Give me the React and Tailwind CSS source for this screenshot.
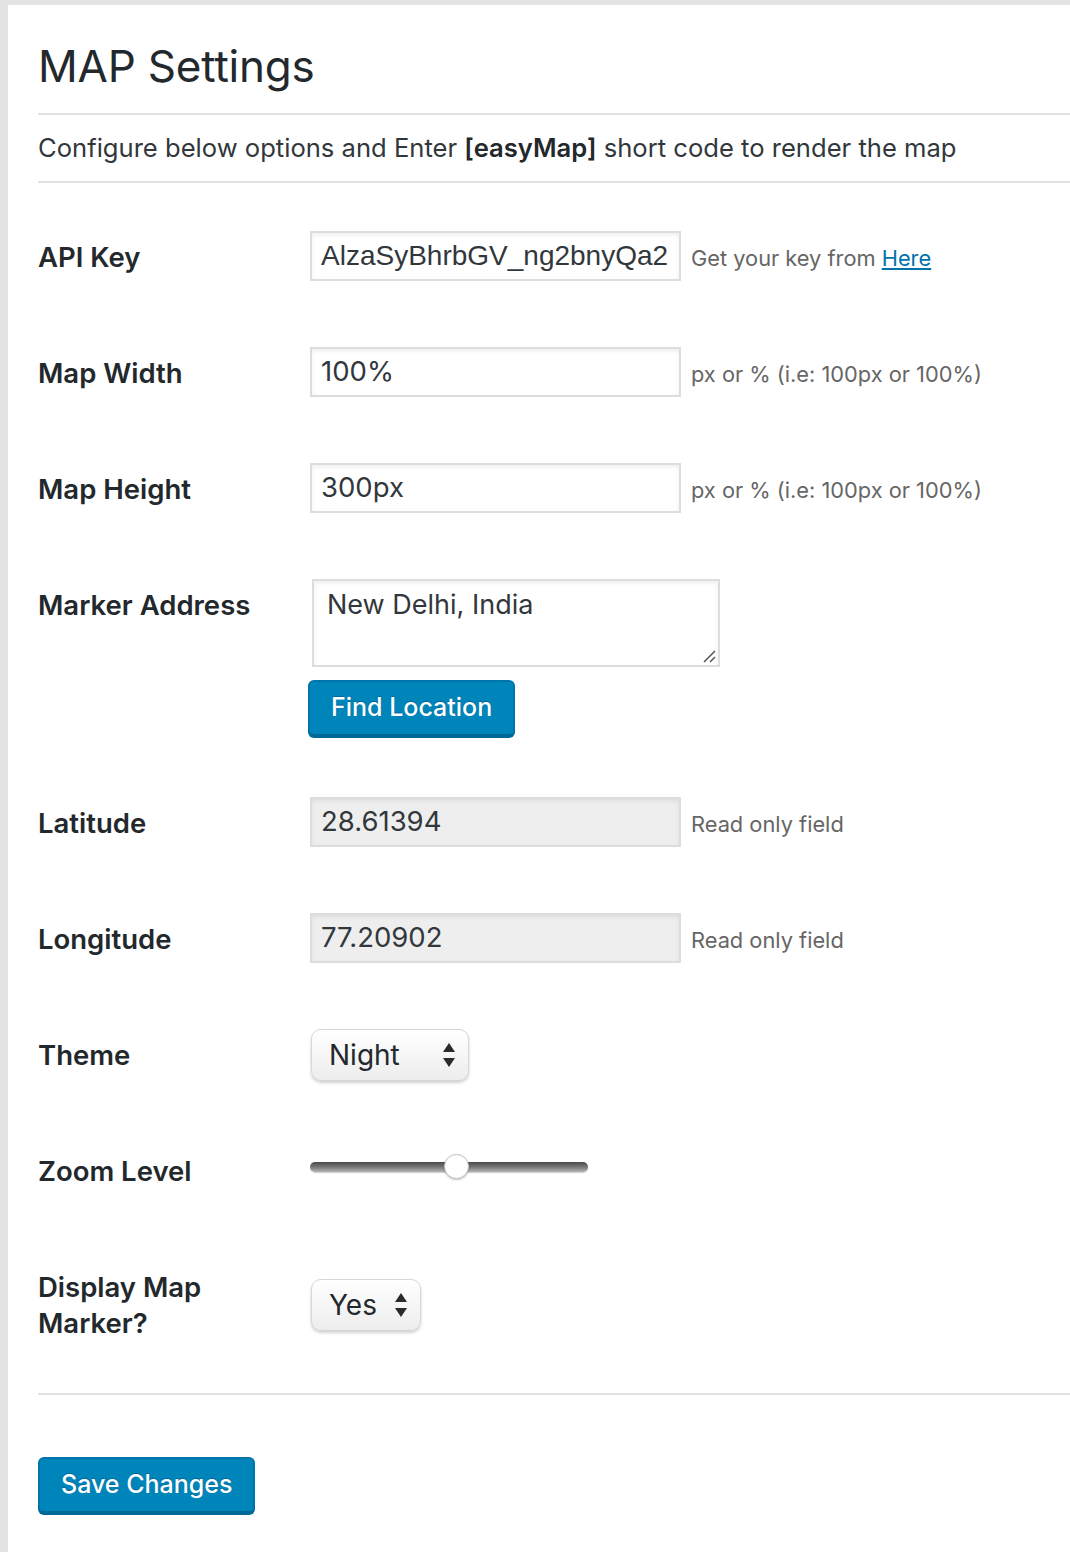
import React from "react";

const font = { fontFamily: "Inter, 'Noto Sans', sans-serif" };

function Arrows() {
  return (
    <svg width="14" height="26" viewBox="0 0 14 26" className="shrink-0">
      <path d="M7 1 L13 10 L1 10 Z" fill="#2b2b2b" />
      <path d="M7 25 L13 16 L1 16 Z" fill="#2b2b2b" />
    </svg>
  );
}

function Label({ children }) {
  return (
    <div className="w-[272px] shrink-0 pt-[8px] text-[27.5px] leading-[36px] font-semibold text-[#23282d]">
      {children}
    </div>
  );
}

function TextInput({ value, readOnly, arial }) {
  return (
    <div
      className={`w-[371px] h-[50px] border-2 border-[#dddddd] shadow-[inset_0_2px_4px_rgba(0,0,0,0.07)] flex items-center px-[9px] text-[#32373c] overflow-hidden whitespace-nowrap ${
        readOnly ? "bg-[#eeeeee]" : "bg-white"
      } ${arial ? "text-[28px] font-['Liberation_Sans',Arial,sans-serif]" : "text-[27.5px]"}`}
    >
      {value}
    </div>
  );
}

function Help({ children }) {
  return <span className="ml-[10px] pt-[4px] text-[21.8px] text-[#666666] whitespace-nowrap">{children}</span>;
}

function NativeSelect({ value, width }) {
  return (
    <div
      className={`${width} h-[52px] rounded-[10px] border border-[#d6d6d6] bg-gradient-to-b from-white to-[#ededed] shadow-[0_2px_3px_rgba(0,0,0,0.18)] flex items-center justify-between pl-[17px] pr-[12px] text-[28px] text-[#23282d]`}
    >
      <span>{value}</span>
      <Arrows />
    </div>
  );
}

const btn =
  "h-[56px] px-[21px] rounded-[6px] bg-[#0085ba] border-2 border-[#0073aa] border-b-[#006799] shadow-[0_2px_0_#006799] text-white text-[25px] font-medium [text-shadow:0_-1px_1px_#006799]";

export default function App() {
  return (
    <div className="min-h-[1552px] bg-[#e3e3e3] pt-[5px] pl-[8px]" style={font}>
      <div className="bg-white min-h-[1547px] pl-[30px]">
        <h1 className="pt-[33px] text-[44px] leading-[56px] tracking-[-0.2px] text-[#23282d] font-normal">MAP Settings</h1>
        <div className="mt-[19px] border-t-2 border-[#e1e1e1]" />
        <p className="pt-[16px] pb-[16px] text-[25.6px] leading-[34px] text-[#32373c]">
          Configure below options and Enter <b className="font-semibold text-[#23282d]">[easyMap]</b> short code to render the map
        </p>
        <div className="border-t-2 border-[#e1e1e1]" />

        <div className="pt-[15px]">
          {/* API Key */}
          <div className="flex pt-[33px] pb-[33px]">
            <Label>API Key</Label>
            <div className="flex items-center">
              <TextInput value="AlzaSyBhrbGV_ng2bnyQa2" arial />
              <Help>
                Get your key from <a className="text-[#0073aa] underline">Here</a>
              </Help>
            </div>
          </div>
          {/* Map Width */}
          <div className="flex pt-[33px] pb-[33px]">
            <Label>Map Width</Label>
            <div className="flex items-center">
              <TextInput value="100%" />
              <Help>px or % (i.e: 100px or 100%)</Help>
            </div>
          </div>
          {/* Map Height */}
          <div className="flex pt-[33px] pb-[33px]">
            <Label>Map Height</Label>
            <div className="flex items-center">
              <TextInput value="300px" />
              <Help>px or % (i.e: 100px or 100%)</Help>
            </div>
          </div>
          {/* Marker Address */}
          <div className="flex pt-[33px] pb-[28px]">
            <Label>Marker Address</Label>
            <div className="flex flex-col items-start">
              <div className="relative ml-[2px] w-[408px] h-[88px] border-2 border-[#dddddd] shadow-[inset_0_2px_4px_rgba(0,0,0,0.07)] px-[13px] pt-[6px] text-[27px] leading-[36px] text-[#32373c]">
                New Delhi, India
                <svg className="absolute right-[2px] bottom-[2px]" width="14" height="14" viewBox="0 0 14 14">
                  <path d="M13 2 L2 13 M13 8 L8 13" stroke="#555" strokeWidth="1.5" />
                </svg>
              </div>
              <button className={`mt-[13px] -ml-[2px] ${btn}`}>Find Location</button>
            </div>
          </div>
          {/* Latitude */}
          <div className="flex pt-[33px] pb-[33px]">
            <Label>Latitude</Label>
            <div className="flex items-center">
              <TextInput value="28.61394" readOnly />
              <Help>Read only field</Help>
            </div>
          </div>
          {/* Longitude */}
          <div className="flex pt-[33px] pb-[33px]">
            <Label>Longitude</Label>
            <div className="flex items-center">
              <TextInput value="77.20902" readOnly />
              <Help>Read only field</Help>
            </div>
          </div>
          {/* Theme */}
          <div className="flex pt-[33px] pb-[32px]">
            <Label>Theme</Label>
            <div className="flex items-start ml-[1px]">
              <NativeSelect value="Night" width="w-[158px]" />
            </div>
          </div>
          {/* Zoom Level */}
          <div className="flex pt-[32px] pb-[39px]">
            <Label>Zoom Level</Label>
            <div className="h-[44px] flex items-center">
              <div className="relative w-[278px] h-[10px] rounded-full bg-gradient-to-b from-[#4a4a4a] via-[#777777] to-[#b5b5b5] shadow-[0_1px_1px_rgba(0,0,0,0.2)]">
                <div className="absolute left-[134px] top-[-8px] w-[25px] h-[25px] rounded-full bg-white border border-[#c4c4c4] shadow-[0_1px_2px_rgba(0,0,0,0.25)]" />
              </div>
            </div>
          </div>
          {/* Display Map Marker */}
          <div className="flex pt-[33px] pb-[33px]">
            <Label>
              Display Map
              <br />
              Marker?
            </Label>
            <div className="pt-[18px] ml-[1px]">
              <NativeSelect value="Yes" width="w-[110px]" />
            </div>
          </div>
        </div>

        <div className="mt-[19px] border-t-2 border-[#e1e1e1]" />
        <div className="pt-[62px]">
          <button className={btn}>Save Changes</button>
        </div>
      </div>
    </div>
  );
}
